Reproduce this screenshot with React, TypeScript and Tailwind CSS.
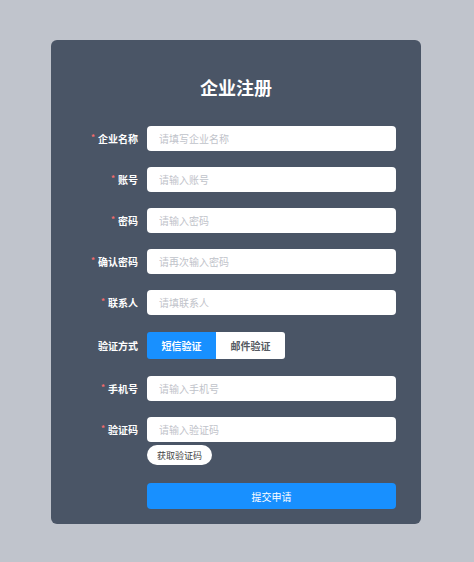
import React from "react";

const font = { fontFamily: '"Noto Sans CJK SC", "Noto Sans", sans-serif' };

function Label({ text, required }: { text: string; required?: boolean }) {
  return (
    <div className="w-[96px] shrink-0 pr-[9px] flex items-center justify-end h-[25px] text-[10px] font-bold text-white leading-none">
      {required && <span className="text-[#f56c6c] text-[8px] mr-[3px] -mt-[3px]">*</span>}
      <span>{text}</span>
    </div>
  );
}

function Field({ label, placeholder, required = true }: { label: string; placeholder: string; required?: boolean }) {
  return (
    <div className="flex items-start">
      <Label text={label} required={required} />
      <input
        className="w-[249px] h-[25px] bg-white rounded-[4px] pl-[12px] text-[10px] text-[#303133] placeholder:text-[#bfc3ca] outline-none"
        placeholder={placeholder}
        style={font}
      />
    </div>
  );
}

export default function App() {
  return (
    <div className="min-h-[562px] w-full bg-[#c0c4cc] pt-[40px] pb-[38px]" style={font}>
      <div className="ml-[51px] w-[370px] h-[484px] bg-[#4a5566] rounded-[6px] pt-[35px]">
        <div className="text-center text-white text-[18px] leading-[24px] font-semibold">企业注册</div>
        <div className="mt-[27px] flex flex-col">
          <Field label="企业名称" placeholder="请填写企业名称" />
          <div className="h-[16px]" />
          <Field label="账号" placeholder="请输入账号" />
          <div className="h-[16px]" />
          <Field label="密码" placeholder="请输入密码" />
          <div className="h-[16px]" />
          <Field label="确认密码" placeholder="请再次输入密码" />
          <div className="h-[16px]" />
          <Field label="联系人" placeholder="请填联系人" />
          <div className="h-[17px]" />
          <div className="flex items-center">
            <div className="w-[96px] shrink-0 pr-[9px] text-right text-[10px] font-bold text-white leading-none">验证方式</div>
            <div className="flex h-[27px]">
              <button className="w-[69px] h-full bg-[#1890ff] text-white text-[10px] font-bold rounded-l-[3px]" style={font}>短信验证</button>
              <button className="w-[69px] h-full bg-white text-[#555a62] text-[10px] font-bold rounded-r-[3px]" style={font}>邮件验证</button>
            </div>
          </div>
          <div className="h-[17px]" />
          <Field label="手机号" placeholder="请输入手机号" />
          <div className="h-[16px]" />
          <Field label="验证码" placeholder="请输入验证码" />
          <div className="flex mt-[3px]">
            <div className="w-[96px] shrink-0" />
            <button className="w-[65px] h-[20px] bg-white rounded-full text-[9px] text-[#444] leading-none" style={font}>获取验证码</button>
          </div>
          <div className="flex mt-[18px]">
            <div className="w-[96px] shrink-0" />
            <button className="w-[249px] h-[26px] bg-[#1890ff] rounded-[4px] text-white text-[10px]" style={font}>提交申请</button>
          </div>
        </div>
      </div>
    </div>
  );
}
